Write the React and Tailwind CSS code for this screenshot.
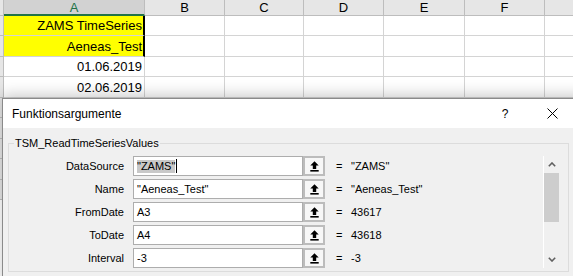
import React from 'react';

// last column (G) sits mostly off-screen, so its header stays blank
const cols = ['A', 'B', 'C', 'D', 'E', 'F', ''];

const sheetRows = [
    { h: 'h-[20px]', a: 'ZAMS TimeSeries', yellow: true },
    { h: 'h-[21px]', a: 'Aeneas_Test', yellow: true },
    { h: 'h-[20px]', a: '01.06.2019' },
    { h: 'h-[21px]', a: '02.06.2019' },
    { h: 'h-[20px]', a: '' },
    { h: 'h-[21px]', a: '' },
    { h: 'h-[20px]', a: '' },
    { h: 'h-[21px]', a: '' },
    { h: 'h-[20px]', a: '' },
];

const args = [
    { label: 'DataSource', input: '"ZAMS"', value: '"ZAMS"', selected: true },
    { label: 'Name', input: '"Aeneas_Test"', value: '"Aeneas_Test"' },
    { label: 'FromDate', input: 'A3', value: '43617' },
    { label: 'ToDate', input: 'A4', value: '43618' },
    { label: 'Interval', input: '-3', value: '-3' },
];

function CollapseIcon() {
    return (
        <svg width="9" height="11" viewBox="0 0 9 11">
            <polygon points="4.5,0.3 8.7,4.6 6.2,4.6 6.2,8 2.8,8 2.8,4.6 0.3,4.6" fill="#000" />
            <rect x="0.3" y="9" width="8.4" height="1.6" fill="#000" />
        </svg>
    );
}

function Chevron({ down }) {
    return (
        <svg width="8" height="5" viewBox="0 0 8 5">
            <polyline
                points={down ? '0.8,0.8 4,4 7.2,0.8' : '0.8,4.2 4,1 7.2,4.2'}
                fill="none"
                stroke="#606060"
                strokeWidth="1.6"
            />
        </svg>
    );
}

function Sheet() {
    return (
        <div className="grid w-[625px] grid-cols-[4px_141px_80px_79px_80px_81px_80px_80px] font-['Liberation_Sans',sans-serif] text-[13px] text-black">
            <div className="h-[16px] bg-[#e6e6e6] border-r border-b border-[#bdbdbd]" />
            {cols.map((c, i) => (
                <div
                    key={i}
                    className={
                        c === 'A'
                            ? 'h-[16px] bg-[#d2d2d2] border-r border-[#bdbdbd] border-b-2 border-b-[#217346] text-[#217346] flex items-center justify-center leading-none'
                            : 'h-[16px] bg-[#e6e6e6] border-r border-b border-[#bdbdbd] flex items-center justify-center leading-none'
                    }
                >
                    {c}
                </div>
            ))}
            {sheetRows.map((row, i) => (
                <React.Fragment key={i}>
                    <div className={`${row.h} bg-[#e6e6e6] border-r border-b border-[#bdbdbd]`} />
                    <div
                        className={
                            row.yellow
                                ? `${row.h} bg-[#ffff00] border-b border-[#d4d4d4] border-r-2 border-r-black flex items-center justify-end pr-[1px] leading-none`
                                : `${row.h} bg-white border-b border-r border-[#d4d4d4] flex items-center justify-end pr-[2px] leading-none`
                        }
                    >
                        {row.a}
                    </div>
                    {cols.slice(1).map((c, j) => (
                        <div key={j} className={`${row.h} bg-white border-b border-r border-[#d4d4d4]`} />
                    ))}
                </React.Fragment>
            ))}
        </div>
    );
}

function ArgRow({ arg }) {
    return (
        <div className="flex items-center h-[20px]">
            <div className="w-[115px] text-right">{arg.label}</div>
            <div className="ml-[9px] w-[170px] h-[20px] bg-white border border-[#adadad] flex items-center pl-[3px]">
                {arg.selected ? (
                    <>
                        <span className="bg-[#c8c8c8] leading-[13px]">{arg.input}</span>
                        <span className="ml-[1px] w-[1px] h-[14px] bg-black" />
                    </>
                ) : (
                    <span>{arg.input}</span>
                )}
            </div>
            <div className="w-[22px] h-[20px] border-2 border-[#bcbcbc] bg-[#f7f7f7] flex items-center justify-center">
                <CollapseIcon />
            </div>
            <div className="ml-[11px] w-[15px]">=</div>
            <div>{arg.value}</div>
        </div>
    );
}

function Dialog() {
    return (
        <div className="absolute left-[2px] top-[98px] w-[600px] h-[190px] border border-[#8a8a8a] bg-[#f0f0f0] shadow-[0_-3px_14px_rgba(0,0,0,0.22)] font-['Liberation_Sans',sans-serif] text-black">
            <div className="h-[29px] bg-white flex items-center">
                <div className="pl-[9px] text-[12px] leading-none">Funktionsargumente</div>
                <div className="ml-auto w-[28px] flex justify-center text-[12px] leading-none">?</div>
                <div className="ml-[19px] mr-[35px] w-[28px] flex justify-center">
                    <svg width="11" height="11" viewBox="0 0 11 11">
                        <path d="M0.5 0.5 L10.5 10.5 M10.5 0.5 L0.5 10.5" stroke="#000" strokeWidth="1" />
                    </svg>
                </div>
            </div>
            <fieldset className="ml-[5px] mt-[7px] w-[561px] border border-[#dcdcdc] pt-[5px] pb-[3px] text-[11px] leading-[16px]">
                <legend className="ml-[5px] px-[1px] leading-[16px]">TSM_ReadTimeSeriesValues</legend>
                <div className="flex">
                    <div className="flex-1 flex flex-col gap-[3px]">
                        {args.map((a) => (
                            <ArgRow key={a.label} arg={a} />
                        ))}
                    </div>
                    <div className="w-[17px] mr-[8px] h-[112px] border-l border-white flex flex-col">
                        <div className="h-[17px] flex items-center justify-center">
                            <Chevron />
                        </div>
                        <div className="h-[49px] w-[15px] bg-[#cdcdcd]" />
                        <div className="flex-1" />
                        <div className="h-[17px] flex items-center justify-center">
                            <Chevron down />
                        </div>
                    </div>
                </div>
            </fieldset>
        </div>
    );
}

export default function App() {
    return (
        <div className="relative w-[573px] h-[276px] overflow-hidden bg-white">
            <Sheet />
            <Dialog />
        </div>
    );
}
